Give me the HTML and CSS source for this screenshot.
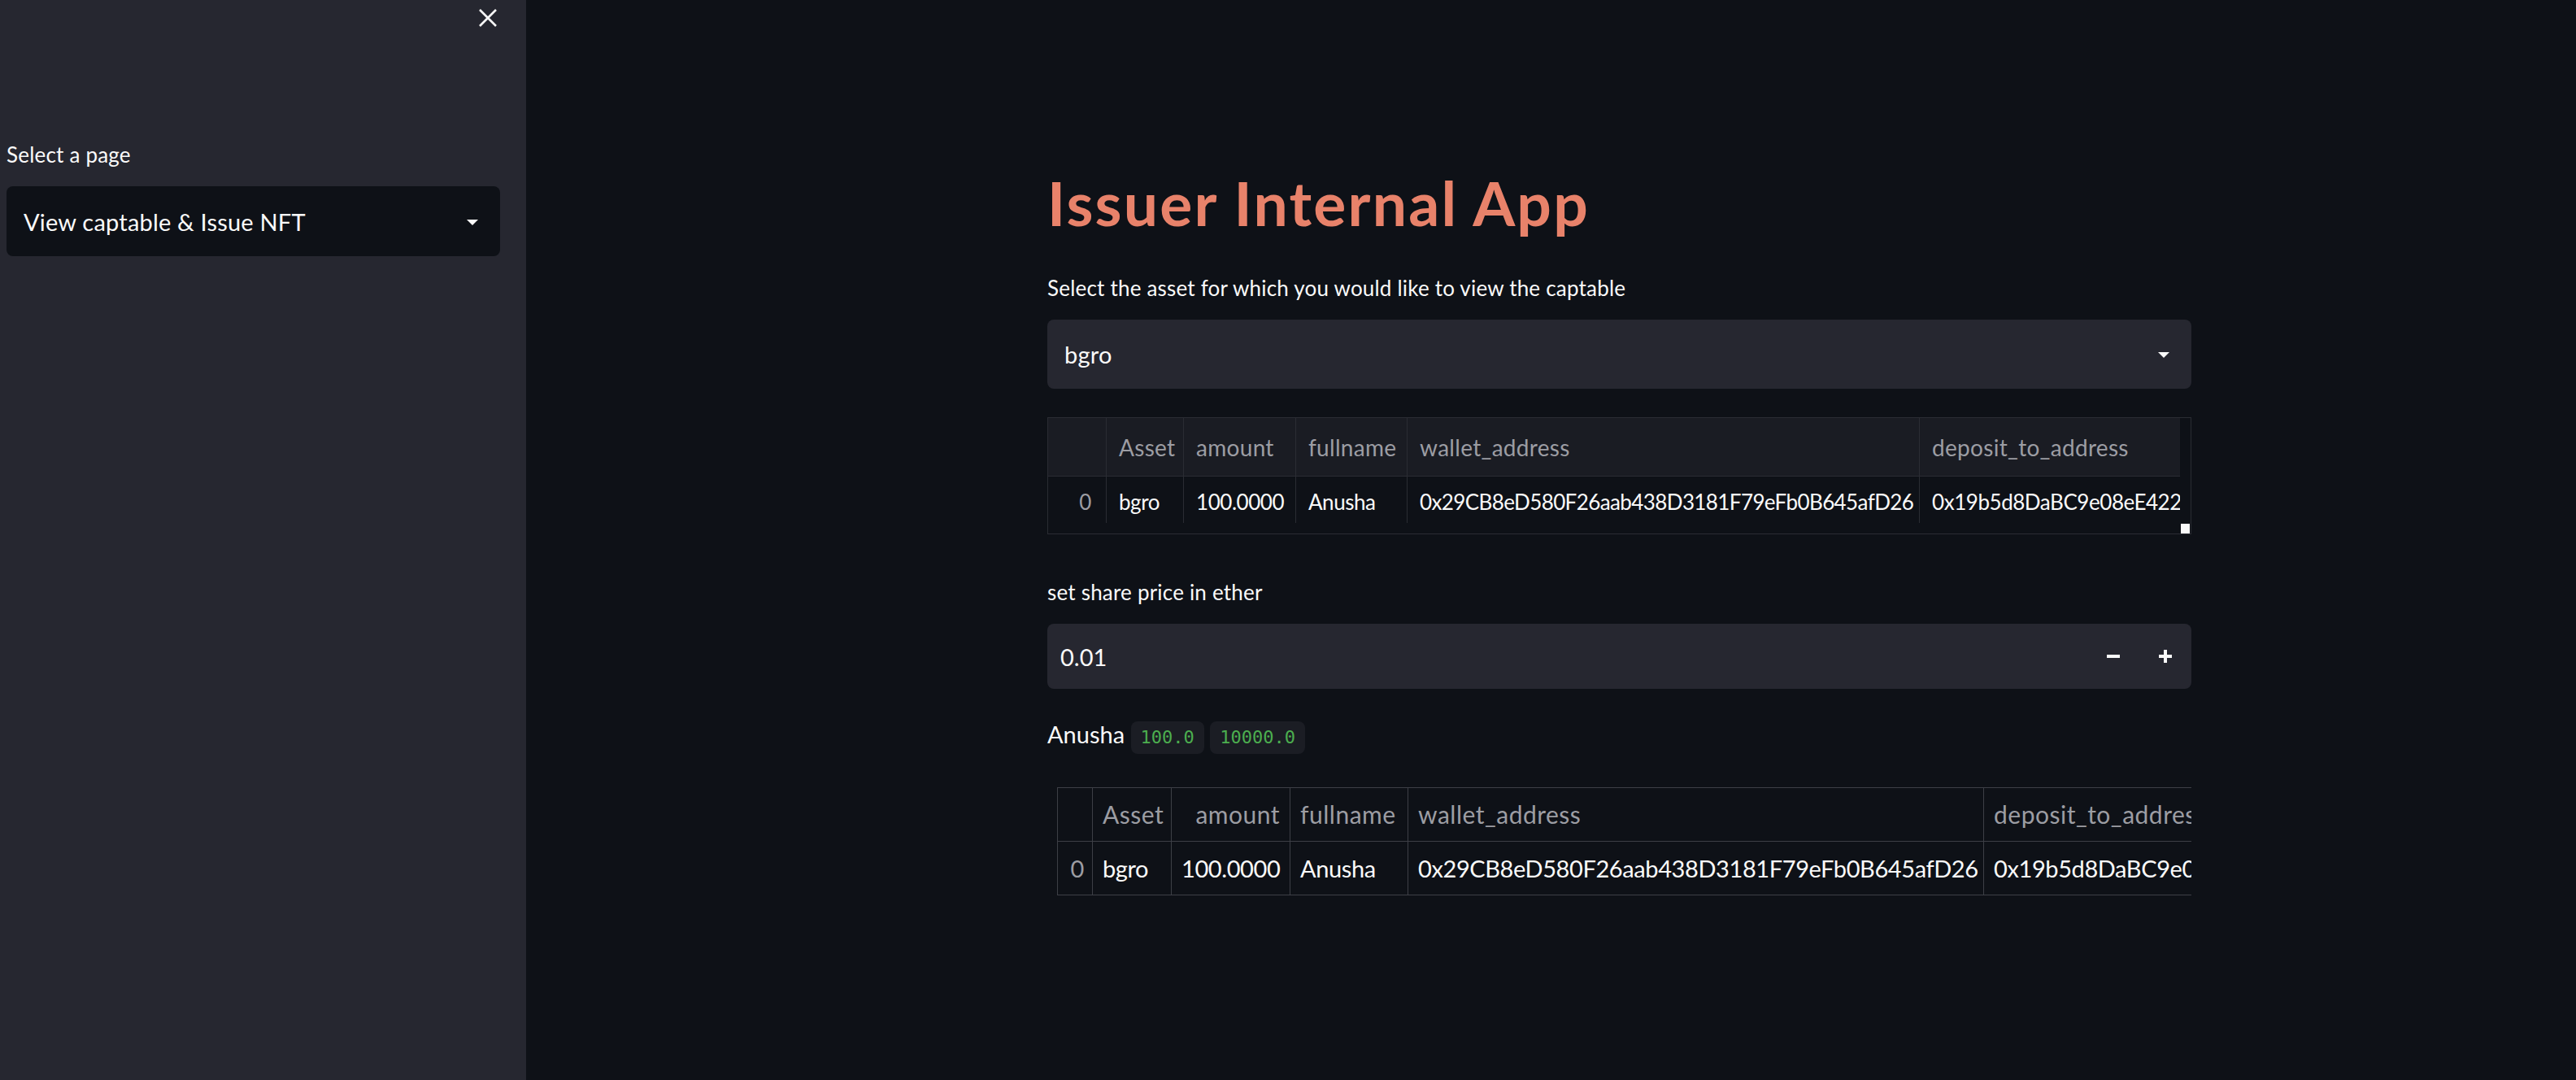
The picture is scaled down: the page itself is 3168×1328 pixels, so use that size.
FILE: index.html
```html
<!DOCTYPE html>
<html lang="en">
<head>
<meta charset="utf-8">
<title>Issuer Internal App</title>
<link rel="stylesheet" href="styles.css">
</head>
<body>
<div class="app">
  <aside class="sidebar">
    <div class="sidebar-head">
      <button class="close-btn" aria-label="Close sidebar">
        <svg width="24" height="24" viewBox="0 0 24 24"><path d="M2 2 L22 22 M22 2 L2 22" stroke="#fafafa" stroke-width="2.6" fill="none"/></svg>
      </button>
    </div>
    <div class="sidebar-body">
      <div class="label">Select a page</div>
      <div class="select select-dark">
        <span class="select-value">View captable &amp; Issue NFT</span>
        <span class="caret"></span>
      </div>
    </div>
  </aside>
  <main class="main">
    <div class="block">
      <h1 class="title">Issuer Internal App</h1>
      <div class="label label-asset">Select the asset for which you would like to view the captable</div>
      <div class="select select-main">
        <span class="select-value">bgro</span>
        <span class="caret"></span>
      </div>

      <div class="df">
        <div class="df-row df-head">
          <div class="c c-idx"></div>
          <div class="c c-asset">Asset</div>
          <div class="c c-amount">amount</div>
          <div class="c c-name">fullname</div>
          <div class="c c-wallet">wallet_address</div>
          <div class="c c-dep">deposit_to_address</div>
        </div>
        <div class="df-row df-data">
          <div class="c c-idx">0</div>
          <div class="c c-asset">bgro</div>
          <div class="c c-amount">100.0000</div>
          <div class="c c-name">Anusha</div>
          <div class="c c-wallet">0x29CB8eD580F26aab438D3181F79eFb0B645afD26</div>
          <div class="c c-dep">0x19b5d8DaBC9e08eE422</div>
        </div>
        <span class="resize"></span>
      </div>

      <div class="label label-price">set share price in ether</div>
      <div class="number">
        <span class="number-value">0.01</span>
        <div class="step-btns">
          <span class="step"><span class="bar-h"></span></span>
          <span class="step"><span class="bar-h"></span><span class="bar-v"></span></span>
        </div>
      </div>

      <p class="holder">Anusha <code>100.0</code> <code>10000.0</code></p>

      <div class="tbl-wrap">
        <table class="tbl">
          <colgroup>
            <col class="w-idx"><col class="w-asset"><col class="w-amount"><col class="w-name"><col class="w-wallet"><col class="w-dep">
          </colgroup>
          <thead>
            <tr><th class="idx"></th><th>Asset</th><th class="num">amount</th><th>fullname</th><th>wallet_address</th><th>deposit_to_address</th></tr>
          </thead>
          <tbody>
            <tr><th class="idx">0</th><td>bgro</td><td class="num">100.0000</td><td>Anusha</td><td>0x29CB8eD580F26aab438D3181F79eFb0B645afD26</td><td>0x19b5d8DaBC9e08eE422</td></tr>
          </tbody>
        </table>
      </div>
    </div>
  </main>
</div>
</body>
</html>
```

FILE: styles.css
```css
html, body {
  margin: 0;
  padding: 0;
  background: #0e1117;
}
body {
  font-family: "Lato", "Noto Sans", sans-serif;
  color: #fafafa;
}
.app {
  display: flex;
  width: 3168px;
  height: 1328px;
  overflow: hidden;
}
.sidebar {
  width: 647px;
  flex: 0 0 647px;
  background: #262730;
  display: flex;
  flex-direction: column;
}
.sidebar-head {
  display: flex;
  justify-content: flex-end;
  padding: 10px 35px 0 0;
  height: 36px;
}
.close-btn {
  background: none;
  border: 0;
  padding: 0;
  width: 24px;
  height: 24px;
  display: block;
}
.close-btn svg { display: block; }
.sidebar-body {
  padding: 128px 32px 0 8px;
  display: flex;
  flex-direction: column;
}
.label {
  font-size: 26px;
  line-height: 32px;
  height: 32px;
  letter-spacing: 0.2px;
  color: #fafafa;
  white-space: nowrap;
}
.select {
  margin-top: 23px;
  border-radius: 8px;
  display: flex;
  align-items: center;
  justify-content: space-between;
  padding: 0 27px 0 21px;
  box-sizing: border-box;
  font-size: 29px;
  letter-spacing: 0.2px;
}
.select-dark {
  background: #0e1117;
  height: 86px;
}
.select-main {
  background: #262730;
  height: 85px;
}
.caret {
  width: 0;
  height: 0;
  border-left: 7px solid transparent;
  border-right: 7px solid transparent;
  border-top: 7px solid #fafafa;
  margin-top: 2px;
}
.main {
  flex: 1;
  background: #0e1117;
}
.block {
  width: 1407px;
  margin-left: 641px;
  padding-top: 205px;
  display: flex;
  flex-direction: column;
}
.title {
  margin: 0;
  font-size: 75px;
  line-height: 89px;
  height: 89px;
  font-weight: 700;
  color: #e8826a;
  letter-spacing: 2.2px;
  white-space: nowrap;
}
.label-asset { margin-top: 44px; }

/* dataframe */
.df {
  position: relative;
  margin-top: 35px;
  height: 144px;
  box-sizing: border-box;
  border: 1px solid #2a2c33;
  overflow: hidden;
}
.df-row {
  display: flex;
  width: 1392px;
}
.df-head {
  height: 72px;
  box-sizing: border-box;
  border-bottom: 1px solid #2a2c33;
  color: #9c9da3;
  font-size: 28px;
  letter-spacing: 0.3px;
}
.df-head .c { background: #1a1c23; }
.df-data {
  height: 57px;
  font-size: 26px;
  letter-spacing: -0.45px;
}
.df-data .c { padding-top: 5px; }
.df-data .c-wallet { letter-spacing: -0.6px; }
.c {
  box-sizing: border-box;
  border-right: 1px solid #2a2c33;
  padding: 0 0 0 15px;
  display: flex;
  align-items: center;
  white-space: nowrap;
  overflow: hidden;
}
.df-row .c-idx { width: 72px; justify-content: flex-end; padding-left: 0; padding-right: 18px; color: #9c9da3; }
.c-asset { width: 95px; }
.c-amount { width: 138px; }
.c-name { width: 137px; }
.c-wallet { width: 630px; }
.c-dep { width: 320px; border-right: 0; }
.resize {
  position: absolute;
  right: 1px;
  bottom: 0;
  width: 11px;
  height: 12px;
  background: #fafafa;
}

.label-price { margin-top: 55px; }
.number {
  margin-top: 23px;
  height: 80px;
  background: #262730;
  border-radius: 8px;
  display: flex;
  align-items: center;
  justify-content: space-between;
  padding-left: 16px;
  font-size: 29px;
}
.step-btns {
  display: flex;
  height: 100%;
}
.step {
  width: 64px;
  height: 100%;
  position: relative;
  display: flex;
  align-items: center;
  justify-content: center;
}
.bar-h {
  width: 16px;
  height: 4px;
  background: #fafafa;
}
.bar-v {
  position: absolute;
  width: 4px;
  height: 16px;
  background: #fafafa;
  left: 30px;
  top: 32px;
}
.holder {
  margin: 36px 0 0 0;
  font-size: 29px;
  line-height: 40px;
  white-space: nowrap;
}
.holder code {
  display: inline-block;
  font-family: "DejaVu Sans Mono", "Liberation Mono", monospace;
  font-size: 22px;
  line-height: 40px;
  height: 40px;
  padding: 0 12px;
  background: #1b1d24;
  color: #4cae4f;
  border-radius: 8px;
  vertical-align: baseline;
}

/* static table */
.tbl-wrap {
  margin: 41px 0 0 12px;
  width: 1395px;
  overflow: hidden;
}
.tbl {
  border-collapse: collapse;
  table-layout: fixed;
  width: 1560px;
}
.w-idx { width: 43px; }
.w-asset { width: 97px; }
.w-amount { width: 146px; }
.w-name { width: 145px; }
.w-wallet { width: 708px; }
.w-dep { width: 421px; }
.tbl th, .tbl td {
  border: 1px solid #3d3f46;
  padding: 8px 12px;
  height: 49px;
  line-height: 49px;
  text-align: left;
  white-space: nowrap;
  overflow: hidden;
  font-weight: 400;
}
.tbl thead th {
  color: #9c9da3;
  font-size: 30px;
  letter-spacing: 0.5px;
}
.tbl tbody th, .tbl td {
  font-size: 29px;
  letter-spacing: -0.4px;
}
.tbl td { color: #fafafa; }
.tbl .idx { color: #9c9da3; text-align: right; padding: 8px 10px; }
.tbl .num { text-align: right; }
```
